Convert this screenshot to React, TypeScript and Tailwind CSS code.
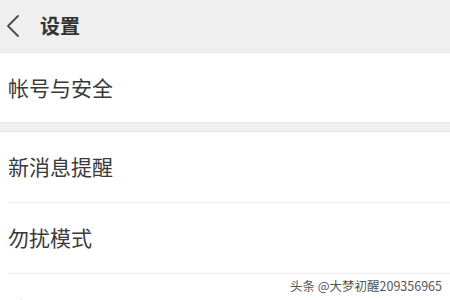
const font = { fontFamily: '"Noto Sans CJK SC", "Noto Sans", sans-serif' }

interface RowProps {
  label: string
  divider?: boolean
}

const Row = ({ label, divider }: RowProps) => (
  <div className="pl-2">
    <div className="flex h-[70px] items-center text-[21px] text-[#3a3a3a]">{label}</div>
    {divider && <div className="h-px bg-[#ececec]" />}
  </div>
)

export default function App() {
  return (
    <div className="relative h-[300px] w-[450px] overflow-hidden bg-white" style={font}>
      <div className="flex h-[53px] items-center border-b border-[#e6e6e6] bg-[#efefef] pl-[6px]">
        <svg width="14" height="22" viewBox="0 0 14 22" fill="none" className="text-[#4a4a4a]">
          <polyline points="12,1 2,11 12,21" stroke="currentColor" strokeWidth="1.8" strokeLinecap="round" strokeLinejoin="round" />
        </svg>
        <span className="ml-[20px] text-[20px] font-bold text-[#333]">设置</span>
      </div>
      <div className="flex h-[69px] items-center pl-2 text-[21px] text-[#3a3a3a]">帐号与安全</div>
      <div className="h-[10px] border-y border-[#e4e4e4] bg-[#f0f0f0]" />
      <Row label="新消息提醒" divider />
      <Row label="勿扰模式" divider />
      <Row label="聊天" />
      <div className="absolute bottom-[4px] right-[8px] text-[12.5px] text-[#555] [text-shadow:0_0_2px_#fff]">
        头条 @大梦初醒209356965
      </div>
    </div>
  )
}
